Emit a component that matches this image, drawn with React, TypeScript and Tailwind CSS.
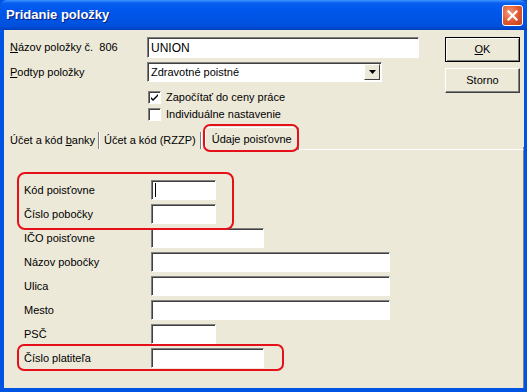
const sunken =
  "bg-white border border-t-[#808080] border-l-[#808080] border-b-white border-r-white shadow-[inset_1px_1px_0_#404040]";

const Field = ({ w, h = "h-5", children }: { w: string; h?: string; children?: React.ReactNode }) => (
  <div className={`${sunken} ${w} ${h} relative flex items-center px-[3px] text-[12px] text-black`}>{children}</div>
);

const Check = ({ on }: { on?: boolean }) => (
  <div className={`${sunken} w-[13px] h-[13px] flex items-center justify-center`}>
    {on && (
      <svg width="9" height="9" viewBox="0 0 9 9">
        <path d="M1 4 L3 6 L8 1 L8 3 L3 8 L1 6 Z" fill="#000" />
      </svg>
    )}
  </div>
);

const Button = ({ children, def }: { children: React.ReactNode; def?: boolean }) => (
  <div
    className={`w-[75px] h-[25px] flex items-center justify-center text-[11px] text-black bg-[#ECE9D8] ${
      def
        ? "border border-black shadow-[inset_1px_1px_0_#fff,inset_-1px_-1px_0_#808080]"
        : "border border-t-white border-l-white border-b-[#404040] border-r-[#404040] shadow-[inset_-1px_-1px_0_#808080]"
    }`}
  >
    {children}
  </div>
);

const rows: { label: string; w: string }[] = [
  { label: "Kód poisťovne", w: "w-[65px]" },
  { label: "Číslo pobočky", w: "w-[65px]" },
  { label: "IČO poisťovne", w: "w-[113px]" },
  { label: "Názov pobočky", w: "w-[239px]" },
  { label: "Ulica", w: "w-[239px]" },
  { label: "Mesto", w: "w-[239px]" },
  { label: "PSČ", w: "w-[65px]" },
  { label: "Číslo platiteľa", w: "w-[113px]" },
];

export default function App() {
  return (
    <div className="relative w-[527px] h-[392px] flex flex-col bg-[#0054E3] font-['Liberation_Sans',Arial,sans-serif] text-[11px] overflow-hidden">
      {/* title bar */}
      <div className="h-[30px] shrink-0 flex items-center justify-between pl-[6px] pr-[4px] rounded-t-[7px] bg-[linear-gradient(to_bottom,#3D95FF_0px,#0A5FF0_3px,#0058EE_8px,#0054E3_20px,#0050DC_26px,#003FC0_30px)]">
        <span className="text-white font-bold text-[13px] [text-shadow:1px_1px_0_#0A1F7A]">Pridanie položky</span>
        <div className="w-[21px] h-[21px] rounded-[3px] border border-white bg-[radial-gradient(circle_at_35%_35%,#F29B7D,#E0552D_55%,#C4401D)] flex items-center justify-center">
          <svg width="11" height="11" viewBox="0 0 11 11">
            <path d="M1.5 1.5 L9.5 9.5 M9.5 1.5 L1.5 9.5" stroke="#fff" strokeWidth="2.2" strokeLinecap="square" />
          </svg>
        </div>
      </div>

      {/* client area */}
      <div className="flex-1 flex flex-col bg-[#ECE9D8] ml-[4px] mr-[3px] mb-[4px] text-black">
        <div className="flex pl-[6px] pt-[7px]">
          <div className="w-[413px] flex flex-col">
            <div className="flex items-center h-[21px]">
              <span className="w-[137px]">
                <u>N</u>ázov položky č.&nbsp;&nbsp;806
              </span>
              <Field w="w-[272px]" h="h-[21px]">UNION</Field>
            </div>
            <div className="flex items-center h-[20px] mt-[4px]">
              <span className="w-[137px]">
                <u>P</u>odtyp položky
              </span>
              <Field w="w-[235px]">
                <span className="text-[11px]">Zdravotné poistné</span>
                <div className="absolute right-[1px] top-[1px] w-[16px] h-[16px] bg-[#ECE9D8] border border-t-white border-l-white border-b-[#404040] border-r-[#404040] flex items-center justify-center">
                  <svg width="7" height="4" viewBox="0 0 7 4">
                    <path d="M0 0 H7 L3.5 4 Z" fill="#000" />
                  </svg>
                </div>
              </Field>
            </div>
            <div className="flex items-center h-[13px] mt-[9px] pl-[138px] gap-[5px]">
              <Check on />
              <span>Započítať do ceny práce</span>
            </div>
            <div className="flex items-center h-[13px] mt-[4px] pl-[138px] gap-[5px]">
              <Check />
              <span>Individuálne nastavenie</span>
            </div>
          </div>
          <div className="ml-[22px] flex flex-col gap-[6px]">
            <Button def>
              <u>O</u>K
            </Button>
            <Button>Storno</Button>
          </div>
        </div>

        {/* tabs */}
        <div className="flex items-end h-[25px] mt-[4px]">
          <div className="h-[19px] pl-[6px] pr-[3px] flex items-center whitespace-pre">
            {"Účet a kód "}
            <u>b</u>
            {"anky"}
          </div>
          <div className="w-[2px] h-[17px] mb-[1px] border-l border-l-[#808080] border-r border-r-white" />
          <div className="h-[19px] px-[4px] flex items-center">Účet a kód (RZZP)</div>
          <div className="w-[2px] h-[17px] mb-[1px] border-l border-l-[#808080] border-r border-r-white" />
          <div className="h-[23px] ml-[3px] px-[6px] flex items-start pt-[3px] border-t border-l border-white border-r border-r-[#808080] shadow-[inset_-1px_0_0_#ACA899]">
            Údaje poisťovne
          </div>
          <div className="flex-1 h-[3px] border-b border-white border-r border-r-[#808080]" />
        </div>

        {/* page */}
        <div className="flex-1 flex flex-col gap-[4px] pt-[30px] pl-[20px] border-r border-r-[#808080]">
          {rows.map((r, i) => (
            <div key={r.label} className="flex items-center h-[20px]">
              <span className="w-[127px]">{r.label}</span>
              <Field w={r.w}>{i === 0 && <span className="w-px h-[14px] bg-black" />}</Field>
            </div>
          ))}
        </div>
      </div>

      {/* red annotations */}
      <div className="absolute left-[203px] top-[124px] w-[96px] h-[28px] border-2 border-[#E5101A] rounded-[7px]" />
      <div className="absolute left-[17px] top-[172px] w-[217px] h-[58px] border-2 border-[#E5101A] rounded-[8px]" />
      <div className="absolute left-[17px] top-[344px] w-[267px] h-[27px] border-2 border-[#E5101A] rounded-[7px]" />
    </div>
  );
}
